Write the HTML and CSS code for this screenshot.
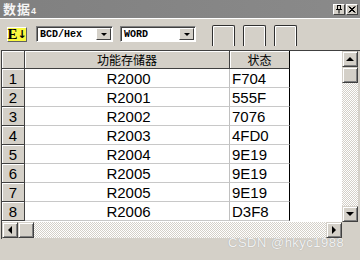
FILE: index.html
```html
<!DOCTYPE html>
<html>
<head>
<meta charset="utf-8">
<link rel="stylesheet" href="styles.css">
</head>
<body>
<div class="window">
  <div class="titlebar">
    <span class="title">数据<small>4</small></span>
    <div class="tbtns">
      <span class="tbtn"><svg width="8" height="9" viewBox="0 0 8 9"><path d="M2 0.5h4M2.5 0.5v4M5.5 0.5v4M1 4.5h6M4 4.5v4" stroke="#000" fill="none"/></svg></span>
      <span class="tbtn"><svg width="8" height="7" viewBox="0 0 8 7"><path d="M0.5 0.5l6 6M6.5 0.5l-6 6M1.5 0.5l6 6M7.5 0.5l-6 6" stroke="#000" fill="none"/></svg></span>
    </div>
  </div>
  <div class="toolbar">
    <span class="ebtn">E<span class="arr">↓</span></span>
    <span class="combo c1"><span class="ctext">BCD/Hex</span><span class="dd"><i></i></span></span>
    <span class="combo c2"><span class="ctext">WORD</span><span class="dd"><i></i></span></span>
    <span class="tools">
      <span class="tool"></span><span class="tool"></span><span class="tool"></span>
    </span>
  </div>
  <div class="gridwrap">
    <div class="gridrow">
      <div class="cells">
        <div class="table">
          <div class="hc corner"></div><div class="hc">功能存储器</div><div class="hc h2">状态</div>
          <div class="rh">1</div><div class="c1c">R2000</div><div class="c2c">F704</div>
          <div class="rh">2</div><div class="c1c">R2001</div><div class="c2c">555F</div>
          <div class="rh">3</div><div class="c1c">R2002</div><div class="c2c">7076</div>
          <div class="rh">4</div><div class="c1c">R2003</div><div class="c2c">4FD0</div>
          <div class="rh">5</div><div class="c1c">R2004</div><div class="c2c">9E19</div>
          <div class="rh">6</div><div class="c1c">R2005</div><div class="c2c">9E19</div>
          <div class="rh">7</div><div class="c1c">R2005</div><div class="c2c">9E19</div>
          <div class="rh">8</div><div class="c1c">R2006</div><div class="c2c">D3F8</div>
        </div>
      </div>
      <div class="vscroll">
        <span class="sbtn"><i class="up"></i></span>
        <span class="thumb"></span>
        <span class="track"></span>
        <span class="sbtn"><i class="down"></i></span>
      </div>
    </div>
    <div class="hscroll">
      <span class="sbtn"><i class="left"></i></span>
      <span class="thumb"></span>
      <span class="track"></span>
      <span class="sbtn"><i class="right"></i></span>
      <span class="sizer"></span>
    </div>
  </div>
  <div class="footer"></div>
  <div class="watermark">CSDN @hkyc1988</div>
</div>
</body>
</html>
```
FILE: styles.css
```css
html, body { margin: 0; padding: 0; }
body { width: 360px; height: 260px; overflow: hidden; background: #d4d0c8; }
.window {
  position: relative;
  width: 360px; height: 260px;
  background: #d4d0c8;
  font-family: "Liberation Sans", Arial, sans-serif;
}
.titlebar {
  height: 18px;
  background: linear-gradient(to right, #808080, #8a8a8a);
  display: flex; align-items: center; justify-content: space-between;
  padding: 0 2px 0 3px;
}
.title {
  color: #f4f4f4;
  font: bold 13px "Noto Sans CJK SC", sans-serif;
  line-height: 18px;
  height: 18px;
  letter-spacing: 1px;
}
.title small { font-size: 9px; font-family: "Liberation Sans", sans-serif; }
.tbtns { display: flex; gap: 1px; padding-top: 1px; }
.tbtn {
  width: 12px; height: 11px;
  box-sizing: border-box;
  background: #d4d0c8;
  border: 1px solid; border-color: #fff #404040 #404040 #fff;
  display: flex; align-items: center; justify-content: center;
}
.toolbar {
  height: 31px;
  border-top: 1px solid #ffffff;
  box-sizing: border-box;
  display: flex; align-items: center;
  padding-left: 7px;
}
.ebtn {
  width: 20px; height: 15px; box-sizing: border-box;
  background: #f8f840;
  border: 1px solid; border-color: #fff #606060 #606060 #fff;
  font: bold 15px "Liberation Serif", serif;
  line-height: 13px; text-align: center; color: #000;
  display: flex; justify-content: center; align-items: center;
}
.ebtn .arr { font: bold 11px "DejaVu Sans", sans-serif; margin-left: 0; }
.combo {
  height: 16px; box-sizing: border-box;
  background: #fff;
  border: 1px solid; border-color: #808080 #fff #fff #808080;
  box-shadow: inset 1px 1px #404040;
  display: flex; align-items: center;
}
.combo.c1 { width: 77px; margin-left: 9px; }
.combo.c2 { width: 76px; margin-left: 7px; }
.ctext {
  flex: 1;
  font: bold 10px "Liberation Mono", monospace;
  padding-left: 3px; color: #000;
}
.dd {
  width: 15px; height: 12px; margin-right: 1px; box-sizing: border-box;
  background: #d4d0c8;
  border: 1px solid; border-color: #fff #404040 #404040 #fff;
  display: flex; align-items: center; justify-content: center;
}
.dd i { width: 0; height: 0; border: 3px solid transparent; border-top: 3px solid #000; border-bottom: 0; margin-top: 1px; }
.tools { display: flex; gap: 8px; margin-left: 16px; margin-top: 2px; }
.tool {
  width: 23px; height: 21px; box-sizing: border-box;
  border: 1px solid #303030; border-bottom: 0;
  border-radius: 2px 2px 0 0;
  box-shadow: inset 1px 1px #ffffff, inset -1px 0 #ffffff;
}
.gridwrap {
  margin-top: 1px; margin-left: 1px;
  width: 359px; height: 189px; box-sizing: border-box;
  border-left: 1px solid #404040; border-top: 1px solid #404040;
  display: flex; flex-direction: column;
}
.gridrow { display: flex; height: 171px; }
.cells { width: 340px; background: #fff; overflow: hidden; }
.table {
  display: grid;
  grid-template-columns: 23px 205px 60px;
  grid-auto-rows: 19px;
  grid-template-rows: 18px;
  font-size: 15px; color: #000;
}
.hc, .rh {
  background: #d4d0c8;
  box-sizing: border-box;
  border-right: 1px solid #404040; border-bottom: 1px solid #404040;
  box-shadow: inset 1px 1px #ffffff;
  display: flex; align-items: center; justify-content: center;
}
.hc { font: 12px "Noto Sans CJK SC", sans-serif; }
.hc.h2 { border-right-color: #000; }
.rh { font-size: 15px; }
.c1c, .c2c {
  box-sizing: border-box;
  border-bottom: 1px solid #c8c8c8;
  display: flex; align-items: center;
}
.c1c { justify-content: center; border-right: 1px solid #c0c0c0; padding-left: 3px; }
.c2c { border-right: 1px solid #000; padding-left: 2px; }
.vscroll {
  width: 16px; display: flex; flex-direction: column;
}
.sbtn {
  width: 16px; height: 16px; box-sizing: border-box; flex: none;
  background: #d4d0c8;
  border: 1px solid; border-color: #d4d0c8 #404040 #404040 #d4d0c8;
  box-shadow: inset 1px 1px #fff, inset -1px -1px #808080;
  display: flex; align-items: center; justify-content: center;
}
.thumb {
  width: 16px; height: 16px; box-sizing: border-box; flex: none;
  background: #d4d0c8;
  border: 1px solid; border-color: #d4d0c8 #404040 #404040 #d4d0c8;
  box-shadow: inset 1px 1px #fff, inset -1px -1px #808080;
}
.track {
  flex: 1;
  background: repeating-conic-gradient(#ffffff 0 25%, #d4d0c8 0 50%) 0 0 / 2px 2px;
}
.sbtn i { width: 0; height: 0; border: 4px solid transparent; }
.sbtn i.up { border-bottom: 4px solid #000; border-top: 0; }
.sbtn i.down { border-top: 4px solid #000; border-bottom: 0; }
.sbtn i.left { border-right: 4px solid #000; border-left: 0; }
.sbtn i.right { border-left: 4px solid #000; border-right: 0; }
.hscroll { display: flex; height: 16px; }
.hscroll .track { flex: none; width: 292px; }
.sizer { width: 16px; height: 16px; background: #d4d0c8; }
.footer { height: 22px; }
.watermark {
  position: absolute; left: 228px; top: 235px;
  font: 13px "Liberation Sans", sans-serif;
  letter-spacing: 0.5px;
  color: #f2f2f2;
  text-shadow: 0 0 1px #9a9a9a;
}
```
